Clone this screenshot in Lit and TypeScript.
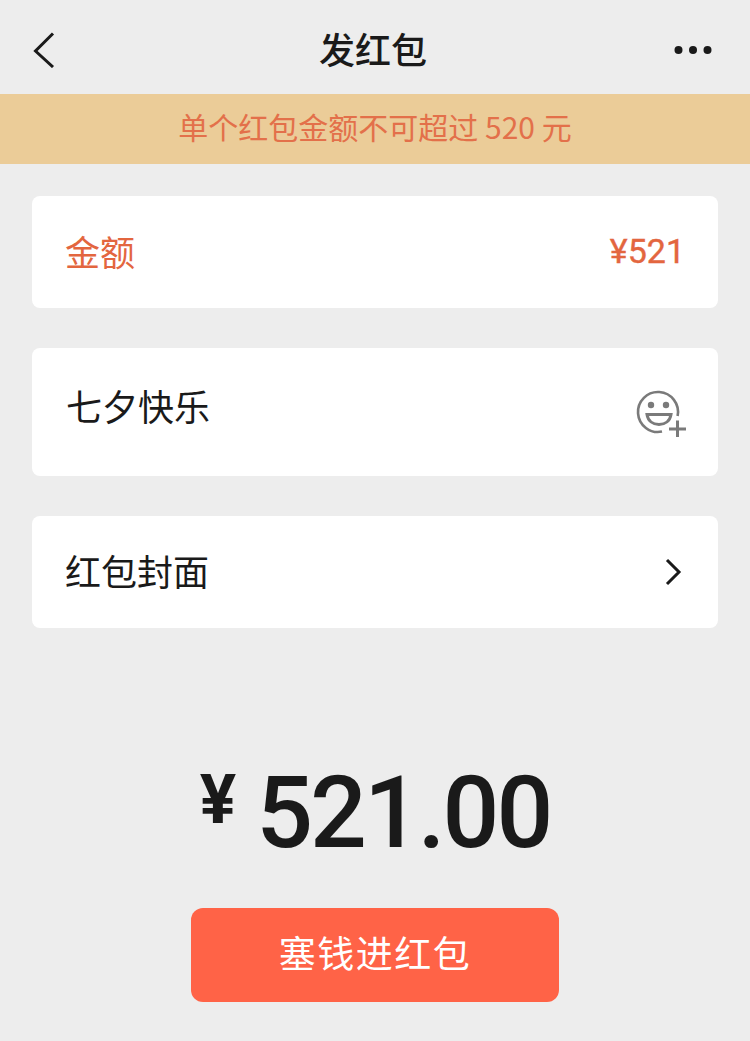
import { LitElement, html, css } from 'lit';
import { customElement } from 'lit/decorators.js';

@customElement('app-root')
export class AppRoot extends LitElement {
  static styles = css`
    :host {
      display: block;
      height: 1041px;
      background: #ededed;
      color: #1a1a1a;
      font-family: "Noto Sans CJK SC", "Noto Sans", sans-serif;
      overflow: hidden;
    }
    .nav {
      height: 94px;
      display: grid;
      grid-template-columns: 1fr auto 1fr;
      align-items: center;
      padding: 6px 38px 0 32px;
      box-sizing: border-box;
    }
    .nav svg {
      display: block;
    }
    .nav .more {
      justify-self: end;
    }
    .title {
      font-size: 36px;
      line-height: 50px;
      font-weight: 500;
      margin-top: -6px;
      padding-top: 2px;
      padding-left: 2px;
    }
    .notice {
      height: 70px;
      background: #ebcc98;
      color: #e3704a;
      font-size: 30px;
      line-height: 65px;
      text-align: center;
    }
    .cards {
      display: flex;
      flex-direction: column;
      gap: 40px;
      padding: 32px 32px 0;
    }
    .card {
      background: #fff;
      border-radius: 8px;
      height: 112px;
      box-sizing: border-box;
      padding: 0 33px;
      display: flex;
      align-items: center;
      justify-content: space-between;
      font-size: 36px;
    }
    .card.amount {
      color: #e3663f;
    }
    .label {
      padding-bottom: 4px;
    }
    .card.amount .label {
      font-size: 35px;
    }
    .card.greeting {
      height: 128px;
      align-items: flex-start;
      padding-top: 31px;
      padding-left: 34px;
      padding-right: 30px;
    }
    .card.greeting svg {
      margin-top: 10px;
    }
    .card.cover {
      padding-right: 36px;
    }
    .value {
      font-family: Roboto, sans-serif;
      font-size: 34px;
      padding-bottom: 2px;
      -webkit-text-stroke: 0.4px #e3663f;
    }
    .total {
      display: flex;
      justify-content: center;
      align-items: flex-start;
      margin-top: 125px;
      height: 121px;
      font-family: Roboto, sans-serif;
      font-weight: 500;
      line-height: 120px;
    }
    .total .sign {
      font-size: 68px;
      line-height: 94px;
      font-weight: 700;
      margin-right: 20px;
    }
    .total .num {
      font-size: 100px;
      letter-spacing: -3px;
    }
    .action {
      display: flex;
      justify-content: center;
      margin-top: 34px;
    }
    .pay {
      width: 368px;
      height: 94px;
      border-radius: 12px;
      background: #ff6347;
      color: #fff;
      font-size: 37px;
      line-height: 88px;
      text-align: center;
      letter-spacing: 1.5px;
    }
  `;

  render() {
    return html`
      <div class="nav">
        <svg width="24" height="36" viewBox="0 0 24 36" fill="none" stroke="#1a1a1a" stroke-width="3">
          <path d="M21 1.5 L3.5 19 L21 35" />
        </svg>
        <div class="title">发红包</div>
        <svg class="more" width="38" height="10" viewBox="0 0 38 10" fill="#1a1a1a">
          <circle cx="4.5" cy="5" r="4" />
          <circle cx="19" cy="5" r="4" />
          <circle cx="33.5" cy="5" r="4" />
        </svg>
      </div>
      <div class="notice">单个红包金额不可超过 520 元</div>
      <div class="cards">
        <div class="card amount">
          <span class="label">金额</span>
          <span class="value">¥521</span>
        </div>
        <div class="card greeting">
          <span class="label">七夕快乐</span>
          <svg width="52" height="48" viewBox="0 0 52 48" fill="none" stroke="#7a7a7a" stroke-width="2.6">
            <path d="M41.6 27 A20 20 0 1 0 26 42.6" />
            <circle cx="15" cy="16" r="3.2" fill="#7a7a7a" stroke="none" />
            <circle cx="30" cy="16" r="3.2" fill="#7a7a7a" stroke="none" />
            <path d="M11 25.5 H35 C34 32 29 35.5 23 35.5 C17 35.5 12 32 11 25.5 Z" stroke-width="3" />
            <path d="M33 40 H50 M41.5 31.5 V48" stroke-width="3" />
          </svg>
        </div>
        <div class="card cover">
          <span class="label">红包封面</span>
          <svg width="18" height="28" viewBox="0 0 18 28" fill="none" stroke="#1a1a1a" stroke-width="3">
            <path d="M3 2 L15 14 L3 26" />
          </svg>
        </div>
      </div>
      <div class="total">
        <span class="sign">¥</span>
        <span class="num">521.00</span>
      </div>
      <div class="action">
        <div class="pay">塞钱进红包</div>
      </div>
    `;
  }
}
